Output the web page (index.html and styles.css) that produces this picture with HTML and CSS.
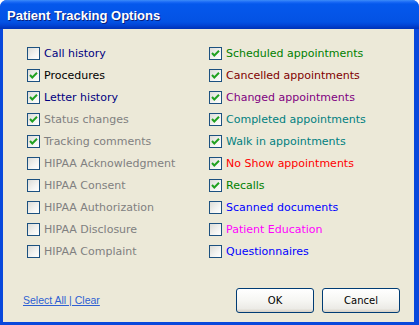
FILE: index.html
```html
<!DOCTYPE html>
<html>
<head>
<meta charset="utf-8">
<link rel="stylesheet" href="styles.css">
</head>
<body>
<div class="window">
  <div class="titlebar"><span class="title">Patient Tracking Options</span></div>
  <div class="client">
    <div class="options">
      <div class="col">
        <label class="opt c-navy"><span class="box"></span>Call history</label>
        <label class="opt c-black"><span class="box on"><svg viewBox="0 0 11 11"><path d="M2 5 L4.3 7.5 L9 2.8"/></svg></span>Procedures</label>
        <label class="opt c-navy"><span class="box on"><svg viewBox="0 0 11 11"><path d="M2 5 L4.3 7.5 L9 2.8"/></svg></span>Letter history</label>
        <label class="opt c-gray"><span class="box on"><svg viewBox="0 0 11 11"><path d="M2 5 L4.3 7.5 L9 2.8"/></svg></span>Status changes</label>
        <label class="opt c-gray"><span class="box on"><svg viewBox="0 0 11 11"><path d="M2 5 L4.3 7.5 L9 2.8"/></svg></span>Tracking comments</label>
        <label class="opt c-gray"><span class="box"></span>HIPAA Acknowledgment</label>
        <label class="opt c-gray"><span class="box"></span>HIPAA Consent</label>
        <label class="opt c-gray"><span class="box"></span>HIPAA Authorization</label>
        <label class="opt c-gray"><span class="box"></span>HIPAA Disclosure</label>
        <label class="opt c-gray"><span class="box"></span>HIPAA Complaint</label>
      </div>
      <div class="col">
        <label class="opt c-green"><span class="box on"><svg viewBox="0 0 11 11"><path d="M2 5 L4.3 7.5 L9 2.8"/></svg></span>Scheduled appointments</label>
        <label class="opt c-maroon"><span class="box on"><svg viewBox="0 0 11 11"><path d="M2 5 L4.3 7.5 L9 2.8"/></svg></span>Cancelled appointments</label>
        <label class="opt c-purple"><span class="box on"><svg viewBox="0 0 11 11"><path d="M2 5 L4.3 7.5 L9 2.8"/></svg></span>Changed appointments</label>
        <label class="opt c-teal"><span class="box on"><svg viewBox="0 0 11 11"><path d="M2 5 L4.3 7.5 L9 2.8"/></svg></span>Completed appointments</label>
        <label class="opt c-teal"><span class="box on"><svg viewBox="0 0 11 11"><path d="M2 5 L4.3 7.5 L9 2.8"/></svg></span>Walk in appointments</label>
        <label class="opt c-red"><span class="box on"><svg viewBox="0 0 11 11"><path d="M2 5 L4.3 7.5 L9 2.8"/></svg></span>No Show appointments</label>
        <label class="opt c-green"><span class="box on"><svg viewBox="0 0 11 11"><path d="M2 5 L4.3 7.5 L9 2.8"/></svg></span>Recalls</label>
        <label class="opt c-blue"><span class="box"></span>Scanned documents</label>
        <label class="opt c-magenta"><span class="box"></span>Patient Education</label>
        <label class="opt c-blue"><span class="box"></span>Questionnaires</label>
      </div>
    </div>
    <div class="footer">
      <a class="link" href="#">Select All | Clear</a>
      <div class="buttons">
        <button class="btn">OK</button>
        <button class="btn">Cancel</button>
      </div>
    </div>
  </div>
</div>
</body>
</html>
```
FILE: styles.css
```css
html, body {
  margin: 0;
  padding: 0;
  background: #ffffff;
}
.window {
  width: 419px;
  height: 325px;
  display: flex;
  flex-direction: column;
  background: #0848DC;
  border-radius: 7px 7px 0 0;
  overflow: hidden;
  font-family: "DejaVu Sans", sans-serif;
  font-size: 11px;
}
.titlebar {
  height: 29px;
  flex: none;
  display: flex;
  align-items: center;
  padding-left: 7px;
  background: linear-gradient(to bottom, #3C8CF8 0px, #1A6AF6 2px, #0458EC 4px, #0455E8 14px, #0352E4 22px, #0245D6 25px, #0036BE 28px, #0033B8 29px);
}
.title {
  color: #ffffff;
  font-family: "Liberation Sans", Arial, sans-serif;
  font-weight: bold;
  font-size: 13px;
  text-shadow: 1px 1px 0 #0A1E7A;
  margin-top: 1px;
}
.client {
  flex: 1;
  margin: 0 5px 3px 3px;
  background: #ECE9D8;
  display: flex;
  flex-direction: column;
}
.options {
  display: flex;
  padding: 13px 0 0 24px;
}
.col {
  display: flex;
  flex-direction: column;
}
.col:first-child {
  width: 182px;
}
.opt {
  height: 22px;
  display: flex;
  align-items: center;
  white-space: nowrap;
}
.box {
  width: 11px;
  height: 11px;
  border: 1px solid #1C5180;
  background: linear-gradient(135deg, #DCDCD7 0%, #F4F4F2 60%, #FFFFFF 100%);
  margin-right: 4px;
  display: inline-flex;
  flex: none;
}
.box svg {
  width: 11px;
  height: 11px;
}
.box svg path {
  fill: none;
  stroke: #21A121;
  stroke-width: 2;
}
.c-navy { color: #000080; }
.c-black { color: #000000; }
.c-gray { color: #808080; }
.c-green { color: #008000; }
.c-maroon { color: #800000; }
.c-purple { color: #800080; }
.c-teal { color: #008080; }
.c-red { color: #FF0000; }
.c-blue { color: #0000FF; }
.c-magenta { color: #FF00FF; }
.footer {
  margin-top: auto;
  display: flex;
  align-items: center;
  justify-content: space-between;
  padding: 0 14px 9px 20px;
}
.link {
  color: #2D5FD2;
  text-decoration: underline;
  font-family: "Liberation Sans", Arial, sans-serif;
  font-size: 10.5px;
  margin-bottom: 1px;
}
.buttons {
  display: flex;
  gap: 8px;
}
.btn {
  width: 78px;
  height: 25px;
  border: 1px solid #003C74;
  border-radius: 3px;
  background: linear-gradient(to bottom, #FFFFFF 0%, #F6F6F3 50%, #ECEBE6 85%, #D6D0C5 100%);
  font-family: "DejaVu Sans", sans-serif;
  font-size: 10px;
  color: #000000;
  padding: 0;
}
```
